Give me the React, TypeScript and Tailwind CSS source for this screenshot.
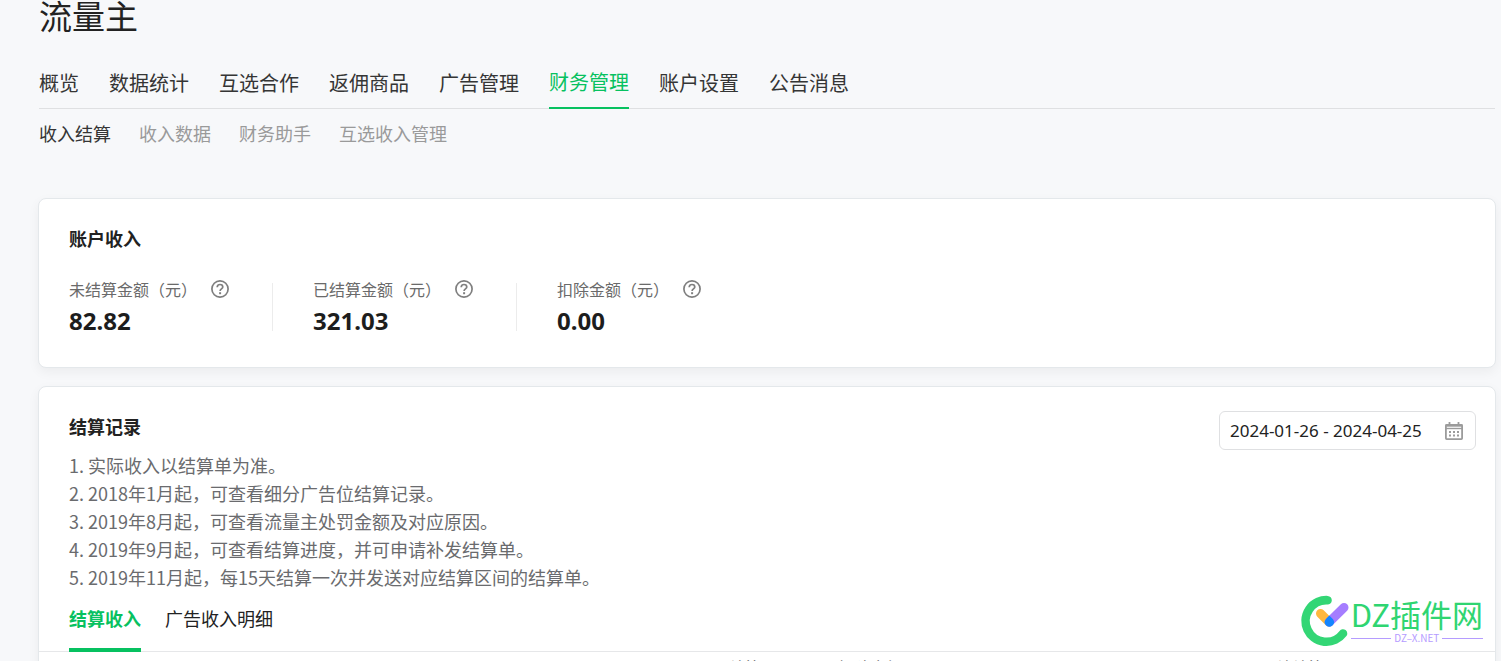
import React from "react";

const mainTabs = ["概览", "数据统计", "互选合作", "返佣商品", "广告管理", "财务管理", "账户设置", "公告消息"];
const subTabs = ["收入结算", "收入数据", "财务助手", "互选收入管理"];

const amounts = [
  { label: "未结算金额（元）", value: "82.82" },
  { label: "已结算金额（元）", value: "321.03" },
  { label: "扣除金额（元）", value: "0.00" },
];

const notes = [
  "1. 实际收入以结算单为准。",
  "2. 2018年1月起，可查看细分广告位结算记录。",
  "3. 2019年8月起，可查看流量主处罚金额及对应原因。",
  "4. 2019年9月起，可查看结算进度，并可申请补发结算单。",
  "5. 2019年11月起，每15天结算一次并发送对应结算区间的结算单。",
];

function HelpIcon() {
  return (
    <svg viewBox="0 0 18 18" className="block size-[18px]" fill="none" stroke="#7f7f7f" aria-hidden="true">
      <circle cx="9" cy="9" r="8.100" strokeWidth="1.700" />
      <path d="M6.200 7.200C6.200 5.400 7.400 4.500 9 4.500s2.800 1 2.800 2.500c0 1.900-2.700 2-2.700 4" strokeWidth="1.700" />
      <path d="M9.100 12.200v2" strokeWidth="2" />
    </svg>
  );
}

function CalendarIcon() {
  return (
    <svg viewBox="0 0 18 18" className="block size-[18px]" fill="none" stroke="#9b9b9b" aria-hidden="true">
      <rect x="0.900" y="2.900" width="16.200" height="14.200" rx="0.800" strokeWidth="1.800" />
      <path d="M0.500 3.500h17" strokeWidth="2.400" />
      <path d="M0.500 6.500h17" strokeWidth="1.400" />
      <path d="M4.500 0v3M13.500 0v3" strokeWidth="1.800" />
      <path d="M4 10h10M4 13.500h10" strokeWidth="2" strokeDasharray="2 2" />
    </svg>
  );
}

function Logo() {
  return (
    <div className="absolute right-[18px] bottom-[14px] flex items-start">
      <svg viewBox="0 0 50 52" className="block h-[52px] w-[50px]" fill="none" strokeLinecap="round" aria-hidden="true">
        <path d="M26.500 5.200A20.800 20.800 0 1 0 42 38.500" stroke="#33d675" strokeWidth="8.600" />
        <path d="M19.500 18.500L28 27" stroke="#ffb83f" strokeWidth="9" />
        <path d="M43 12.500L28.300 27" stroke="#a57dff" strokeWidth="9" />
        <path d="M28.300 20.600L32 24.200A4.600 4.600 0 1 1 24.700 24.200Z" fill="#1485ff" />
      </svg>
      <div className="flex flex-col">
        <span className="text-[31px] leading-[37px] text-[#2fd571]">DZ插件网</span>
        <span className="flex items-center gap-[3px] text-[10px] leading-[12px] text-[#b59cff]">
          <span className="h-px flex-1 bg-[#b59cff]" />
          DZ–X.NET
          <span className="h-px flex-1 bg-[#b59cff]" />
        </span>
      </div>
    </div>
  );
}

export default function App() {
  return (
    <div className="relative h-screen overflow-hidden bg-[#f7f8fa] pr-[5px] pl-[38px] font-['Noto_Sans_CJK_SC',sans-serif] text-[#353535]">
      <header className="mx-px">
        <h1 className="text-[33px] leading-[30px] text-[#222222]">流量主</h1>
        <nav className="mt-7 flex h-[51px] gap-[30px] border-b border-[#dfe0e2] text-[20px]">
          {mainTabs.map((tab) => (
            <a
              key={tab}
              href="#"
              className={
                tab === "财务管理"
                  ? "h-[51px] border-b-2 border-[#07c160] leading-[48px] text-[#07c160]"
                  : "h-[51px] leading-[50px]"
              }
            >
              {tab}
            </a>
          ))}
        </nav>
        <nav className="flex h-[50px] gap-7 text-[18px] leading-[48px]">
          {subTabs.map((tab, i) => (
            <a key={tab} href="#" className={i === 0 ? "text-[#353535]" : "text-[#9a9a9a]"}>
              {tab}
            </a>
          ))}
        </nav>
      </header>

      <main className="mt-[39px] flex flex-col gap-[18px]">
        <section className="rounded-lg border border-[#e4e8eb] bg-white px-[30px] pt-[25px] pb-[36px] shadow-[0_4px_12px_rgba(0,0,0,0.05)]">
          <h2 className="text-[18px] leading-[28px] font-bold text-[#222222]">账户收入</h2>
          <dl className="mt-[31px] flex">
            {amounts.map((item, i) => (
              <div
                key={item.label}
                className={
                  i === 0
                    ? "h-[48px] border-r border-[#ececec] pr-[43px]"
                    : i === 1
                      ? "h-[48px] border-r border-[#ececec] pr-[43px] pl-[40px]"
                      : "h-[48px] pl-[40px]"
                }
              >
                <dt className="flex h-[12px] items-center gap-[14px] text-[16px] leading-[12px] text-[#6a6a6a]">
                  {item.label}
                  <button type="button" aria-label="说明">
                    <HelpIcon />
                  </button>
                </dt>
                <dd className="mt-[9px] font-['Noto_Sans',sans-serif] text-[24px] leading-[34px] font-bold text-[#1d1d1d]">
                  {item.value}
                </dd>
              </div>
            ))}
          </dl>
        </section>

        <section className="rounded-lg border border-[#e4e8eb] bg-white pt-[24px] shadow-[0_4px_12px_rgba(0,0,0,0.05)]">
          <div className="flex items-start justify-between pr-[19px] pl-[30px]">
            <div>
              <h2 className="mt-px text-[18px] leading-[28px] font-bold text-[#222222]">结算记录</h2>
              <ul className="mt-[11px] text-[18px] leading-[28px] text-[#6a6b6e]">
                {notes.map((note) => (
                  <li key={note}>{note}</li>
                ))}
              </ul>
            </div>
            <div className="flex h-[39px] w-[257px] items-center rounded-md border border-[#dfe0e2] pr-[12px] pl-[10px]">
              <input
                type="text"
                readOnly
                aria-label="日期范围"
                value="2024-01-26 - 2024-04-25"
                className="w-full min-w-0 flex-1 bg-transparent font-['Noto_Sans',sans-serif] text-[17px] text-[#222222] outline-none"
              />
              <button type="button" aria-label="选择日期">
                <CalendarIcon />
              </button>
            </div>
          </div>

          <div className="mt-[8px] flex h-[53px] gap-6 border-b border-[#e6e7e9] px-[30px] text-[18px] leading-[38px]">
            <button type="button" className="h-[53px] border-b-4 border-[#07c160] pb-[11px] font-bold text-[#07c160]">
              结算收入
            </button>
            <button type="button" className="h-[53px] pb-[15px] text-[#222222]">
              广告收入明细
            </button>
          </div>

          <table className="w-full table-fixed text-left text-[16px] leading-[24px] text-[#6a6a6a]">
            <thead>
              <tr>
                <th className="w-[690px] pt-[3px] pb-3" />
                <th className="w-[109px] pt-[3px] pb-3 font-normal">结算</th>
                <th className="pt-[3px] pb-3 font-normal">扣除金额</th>
                <th className="w-[219px] pt-[3px] pb-3 font-normal">结结算</th>
              </tr>
            </thead>
          </table>
        </section>
      </main>
      <Logo />
    </div>
  );
}
